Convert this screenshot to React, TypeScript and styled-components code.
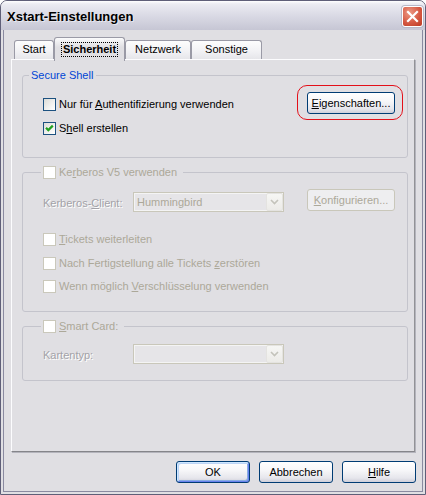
import React from 'react'
import styled, { createGlobalStyle } from 'styled-components'

const GlobalStyle = createGlobalStyle`
    html, body {
        margin: 0;
        padding: 0;
        background: #ffffff;
    }
    body {
        font-family: 'Liberation Sans', Arial, sans-serif;
        font-size: 11px;
        color: #000000;
    }
    * {
        box-sizing: border-box;
    }
`

const tabs = [
    { label: 'Start', width: 40 },
    { label: 'Sicherheit', width: 71, active: true },
    { label: 'Netzwerk', width: 66 },
    { label: 'Sonstige', width: 71 },
]

interface CheckProps {
    checked?: boolean
    disabled?: boolean
    top?: number
    children: React.ReactNode
}

const Check: React.FC<CheckProps> = ({ checked, disabled, top, children }) => (
    <CheckRow $top={top} $disabled={disabled}>
        <Box $disabled={disabled}>
            {checked && (
                <svg width="11" height="11" viewBox="0 0 11 11">
                    <path d="M2 4.8 L4.3 7.1 L8.8 2.6" fill="none" stroke="#21a121" strokeWidth="2.2" />
                </svg>
            )}
        </Box>
        <CheckText>{children}</CheckText>
    </CheckRow>
)

const Chevron = () => (
    <svg width="9" height="6" viewBox="0 0 9 6">
        <path d="M1 1 L4.5 4.5 L8 1" fill="none" stroke="#c4c3bb" strokeWidth="1.6" />
    </svg>
)

const App: React.FC = () => {
    return (
        <>
            <GlobalStyle />
            <Window>
                <TitleBar>
                    <Title>Xstart-Einstellungen</Title>
                    <CloseButton>
                        <svg width="19" height="19" viewBox="0 0 19 19">
                            <path d="M5 5 L14 14 M14 5 L5 14" stroke="#ffffff" strokeWidth="2.2" strokeLinecap="square" />
                        </svg>
                    </CloseButton>
                </TitleBar>
                <Body>
                    <TabRow>
                        {tabs.map((t) => (
                            <Tab key={t.label} $width={t.width} $active={t.active}>
                                {t.active ? <Focus>{t.label}</Focus> : t.label}
                            </Tab>
                        ))}
                    </TabRow>
                    <Panel>
                        <Group>
                            <Legend $indent={6} $padRight={3} $color="#0046d5">Secure Shell</Legend>
                            <GroupBody $pad="10px 12px 22px 20px">
                                <Row>
                                    <Check top={6}>Nur für <Key>A</Key>uthentifizierung verwenden</Check>
                                    <Marked>
                                        <Button $width={88}><Key>E</Key>igenschaften...</Button>
                                    </Marked>
                                </Row>
                                <Check checked top={8}>S<Key>h</Key>ell erstellen</Check>
                            </GroupBody>
                        </Group>

                        <Group $gap={8}>
                            <Legend $indent={18} $padRight={6}>
                                <Check disabled>Ke<Key>r</Key>beros V5 verwenden</Check>
                            </Legend>
                            <GroupBody $pad="10px 12px 18px 20px">
                                <Row>
                                    <Field>
                                        <FieldLabel $top={8}>Kerberos-<Key>C</Key>lient:</FieldLabel>
                                        <Combo $top={3}>
                                            <ComboText>Hummingbird</ComboText>
                                            <ComboArrow><Chevron /></ComboArrow>
                                        </Combo>
                                    </Field>
                                    <Button $width={88} disabled><Key>K</Key>onfigurieren...</Button>
                                </Row>
                                <Check disabled top={21}><Key>T</Key>ickets weiterleiten</Check>
                                <Check disabled top={11}>Nach Fertigstellung alle Tickets <Key>z</Key>erstören</Check>
                                <Check disabled top={10}>Wenn möglich <Key>V</Key>erschlüsselung verwenden</Check>
                            </GroupBody>
                        </Group>

                        <Group $gap={8}>
                            <Legend $indent={18} $padRight={6}>
                                <Check disabled><Key>S</Key>mart Card:</Check>
                            </Legend>
                            <GroupBody $pad="11px 12px 16px 20px">
                                <Field>
                                    <FieldLabel $top={5}>Kartentyp:</FieldLabel>
                                    <Combo>
                                        <ComboText />
                                        <ComboArrow><Chevron /></ComboArrow>
                                    </Combo>
                                </Field>
                            </GroupBody>
                        </Group>
                    </Panel>
                    <ButtonRow>
                        <Button $width={74} $default>OK</Button>
                        <Button $width={74}>Abbrechen</Button>
                        <Button $width={74}><Key>H</Key>ilfe</Button>
                    </ButtonRow>
                </Body>
            </Window>
        </>
    )
}

const Window = styled.div`
    width: 426px;
    height: 495px;
    display: flex;
    flex-direction: column;
    background: #e0dfe3;
    border: 1px solid #5f5f78;
    border-radius: 7px 7px 0 0;
    overflow: hidden;
`

const TitleBar = styled.div`
    height: 29px;
    flex: none;
    display: flex;
    align-items: center;
    padding: 2px 2px 0 6px;
    background: linear-gradient(180deg, #ffffff 0%, #ececf2 10%, #dedee8 40%, #d2d2de 70%, #c6c6d4 100%);
`

const Title = styled.div`
    font-family: 'Liberation Sans', Arial, sans-serif;
    font-size: 13px;
    font-weight: bold;
    color: #000000;
    text-shadow: 1px 1px 0 rgba(255, 255, 255, 0.5);
`

const CloseButton = styled.div`
    margin-left: auto;
    width: 21px;
    height: 21px;
    display: flex;
    align-items: center;
    justify-content: center;
    border: 1px solid #ffffff;
    border-radius: 3px;
    background: radial-gradient(circle at 35% 30%, #ec9a86 0%, #d65a44 55%, #bb3a24 100%);
    box-shadow: 0 0 0 1px #b8b8c8;
`

const Body = styled.div`
    flex: 1;
    display: flex;
    flex-direction: column;
    margin: 0 2px 2px;
    padding: 7px 7px 8px;
    border: 1px solid #8a8aa0;
    border-top: none;
    min-height: 0;
`

const TabRow = styled.div`
    display: flex;
    align-items: flex-end;
    height: 22px;
    padding-left: 3px;
    position: relative;
    z-index: 1;
`

const Tab = styled.div<{ $width: number; $active?: boolean }>`
    width: ${(p) => p.$width}px;
    height: ${(p) => (p.$active ? 24 : 19)}px;
    margin-bottom: ${(p) => (p.$active ? -2 : 0)}px;
    display: flex;
    justify-content: center;
    align-items: flex-start;
    padding-top: ${(p) => (p.$active ? 5 : 2)}px;
    line-height: 13px;
    font-weight: ${(p) => (p.$active ? 'bold' : 'normal')};
    border: 1px solid #9a9aa6;
    border-bottom: none;
    border-radius: 3px 3px 0 0;
    background: ${(p) => (p.$active ? 'linear-gradient(180deg, #fbfbfc 0%, #e0dfe3 40%)' : 'linear-gradient(180deg, #fdfdfd 0%, #f1f1f4 60%, #e6e6ea 100%)')};
    white-space: nowrap;
`

const Focus = styled.span`
    outline: 1px dotted #000000;
    outline-offset: 0;
    padding: 0 1px;
`

const Panel = styled.div`
    flex: 1;
    display: flex;
    flex-direction: column;
    padding: 9px 6px 0 10px;
    border: 1px solid;
    border-color: #fcfcfe #929296 #85858a #fcfcfe;
    box-shadow: 1px 1px 0 #b4b4bc;
    background: #e0dfe3;
`

const Group = styled.fieldset<{ $gap?: number }>`
    margin: ${(p) => p.$gap ?? 0}px 0 0 0;
    padding: 0;
    min-width: 0;
    border: 1px solid #c4c4cc;
    border-radius: 3px;
`

const Legend = styled.legend<{ $indent: number; $padRight: number; $color?: string }>`
    margin-left: ${(p) => p.$indent}px;
    padding: 0 ${(p) => p.$padRight}px 0 2px;
    height: 13px;
    line-height: 13px;
    color: ${(p) => p.$color ?? '#000000'};
`

const GroupBody = styled.div<{ $pad: string }>`
    display: flex;
    flex-direction: column;
    padding: ${(p) => p.$pad};
`

const Row = styled.div`
    display: flex;
    justify-content: space-between;
    align-items: flex-start;
`

const CheckRow = styled.label<{ $top?: number; $disabled?: boolean }>`
    display: flex;
    align-items: center;
    height: 13px;
    line-height: 13px;
    margin-top: ${(p) => p.$top ?? 0}px;
    color: ${(p) => (p.$disabled ? '#aca899' : '#000000')};
    white-space: nowrap;
`

const Box = styled.span<{ $disabled?: boolean }>`
    width: 13px;
    height: 13px;
    flex: none;
    display: inline-flex;
    align-items: center;
    justify-content: center;
    border: 1px solid ${(p) => (p.$disabled ? '#cac8bb' : '#1c5180')};
    background: ${(p) => (p.$disabled ? '#ffffff' : 'linear-gradient(135deg, #dcdcd7 0%, #f2f2f0 60%, #ffffff 100%)')};
`

const CheckText = styled.span`
    margin-left: 3px;
`

const Key = styled.span`
    text-decoration: underline;
    text-underline-offset: 1px;
`

const Field = styled.div`
    display: flex;
    align-items: flex-start;
`

const FieldLabel = styled.div<{ $top: number }>`
    width: 90px;
    margin-top: ${(p) => p.$top}px;
    line-height: 13px;
    color: #a3a2a8;
    text-shadow: 1px 1px 0 #ffffff;
    white-space: nowrap;
`

const Combo = styled.div<{ $top?: number }>`
    width: 151px;
    height: 20px;
    margin-top: ${(p) => p.$top ?? 0}px;
    display: flex;
    align-items: center;
    border: 1px solid #c9c7ba;
    background: #e6e5e8;
    box-shadow: inset 0 0 0 1px #f4f4f4;
`

const ComboText = styled.span`
    flex: 1;
    padding-left: 3px;
    color: #aca899;
`

const ComboArrow = styled.span`
    width: 17px;
    height: 18px;
    display: flex;
    align-items: center;
    justify-content: center;
    border: 1px solid #e4e3e0;
    border-radius: 2px;
    background: linear-gradient(180deg, #f6f6f4 0%, #ecebe8 100%);
`

const Marked = styled.span`
    position: relative;
    display: inline-flex;
    flex: none;
    &::after {
        content: '';
        position: absolute;
        top: -7px;
        bottom: -6px;
        left: -10px;
        right: -8px;
        border: 1px solid #e3101a;
        border-radius: 10px;
        pointer-events: none;
    }
`

const Button = styled.button<{ $width: number; $default?: boolean }>`
    width: ${(p) => p.$width}px;
    height: 22px;
    flex: none;
    padding: 0;
    font-family: 'Liberation Sans', Arial, sans-serif;
    font-size: 11px;
    color: #000000;
    border: 1px solid #003c74;
    border-radius: 3px;
    background: linear-gradient(180deg, #ffffff 0%, #f7f7f9 40%, #e6e6ec 80%, #cfcfda 100%);
    box-shadow: ${(p) =>
        p.$default
            ? 'inset 1px 1px 0 #cee7ff, inset -1px -1px 0 #6982ee, inset 2px 2px 0 #bcd4f6, inset -2px -2px 0 #89ade4'
            : 'none'};
    &:disabled {
        color: #aca899;
        border-color: #c9c7ba;
        background: #eeeef0;
        text-shadow: none;
    }
`

const ButtonRow = styled.div`
    display: flex;
    justify-content: flex-end;
    gap: 9px;
    margin: 9px -1px 0 0;
    flex: none;
`

export default App
